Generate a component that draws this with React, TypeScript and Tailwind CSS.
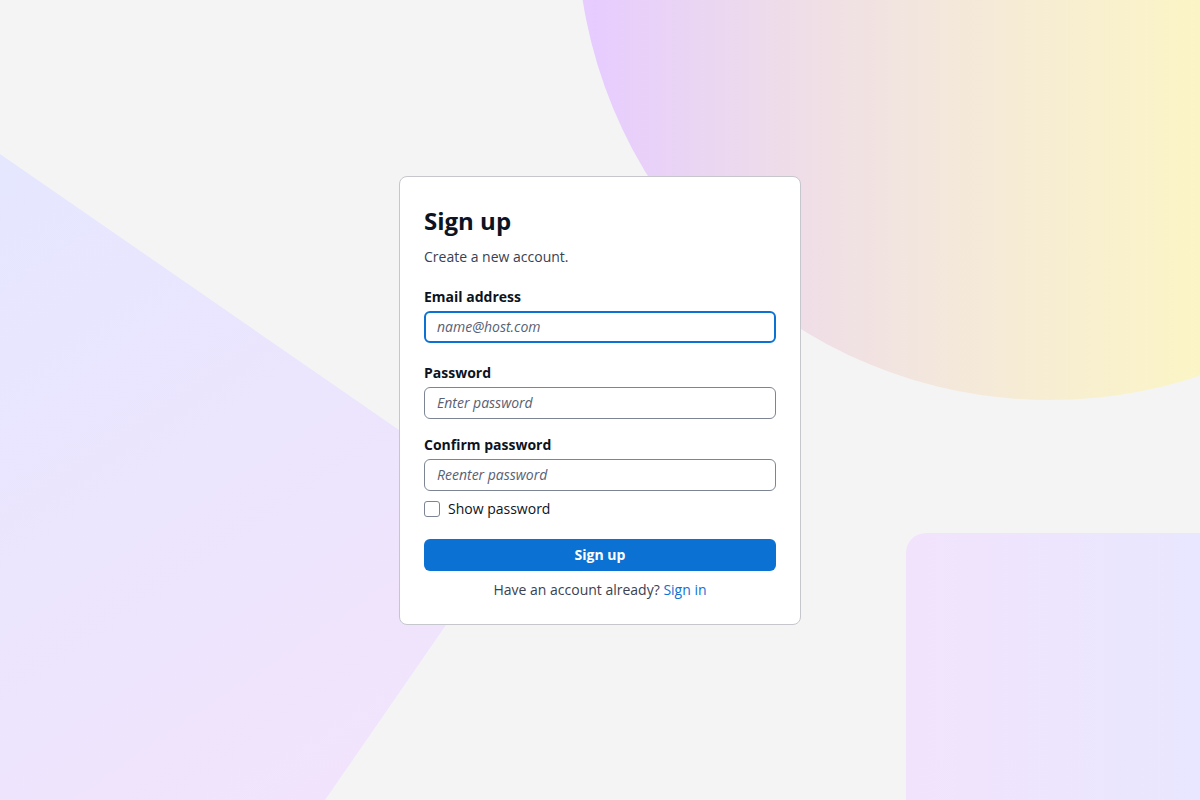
import { useState } from "react";

type FieldProps = {
  label: string;
  placeholder: string;
  type?: string;
  focused?: boolean;
  className?: string;
};

const Field = ({ label, placeholder, type = "text", focused, className }: FieldProps) => (
  <label className={`flex flex-col ${className ?? ""}`}>
    <span className="mb-[4px] text-sm leading-5 font-bold text-[#0c1322]">
      {label}
    </span>
    <input
      type={type}
      placeholder={placeholder}
      className={
        focused
          ? "h-8 w-full rounded-md border-2 border-[#0b72d4] bg-white px-[11px] text-sm text-[#0c1322] outline-none placeholder:text-[#586174] placeholder:italic"
          : "h-8 w-full rounded-md border border-[#7d8594] bg-white px-3 text-sm text-[#0c1322] outline-none placeholder:text-[#586174] placeholder:italic"
      }
    />
  </label>
);

// soft shapes behind the card
const Backdrop = () => (
  <svg
    className="pointer-events-none absolute inset-0 h-full w-full"
    viewBox="0 0 1200 800"
    preserveAspectRatio="none"
  >
    <defs>
      <linearGradient id="sun" gradientUnits="userSpaceOnUse" x1="590" y1="0" x2="1200" y2="0">
        <stop offset="0" stopColor="#e6ccff" />
        <stop offset="0.35" stopColor="#efdee7" />
        <stop offset="0.7" stopColor="#f6ecd5" />
        <stop offset="1" stopColor="#fbf5c6" />
      </linearGradient>
      <linearGradient id="kite" gradientUnits="userSpaceOnUse" x1="0" y1="160" x2="420" y2="780">
        <stop offset="0" stopColor="#e5e7ff" />
        <stop offset="1" stopColor="#f2e3fc" />
      </linearGradient>
      <linearGradient id="tile" gradientUnits="userSpaceOnUse" x1="906" y1="0" x2="1200" y2="0">
        <stop offset="0" stopColor="#f2e3fc" />
        <stop offset="1" stopColor="#e8e7ff" />
      </linearGradient>
    </defs>
    <circle cx="1050" cy="-73" r="473" fill="url(#sun)" />
    <polygon points="0,154 522,515 325,800 0,800" fill="url(#kite)" />
    <rect x="906" y="533" width="420" height="420" rx="20" fill="url(#tile)" />
  </svg>
);

export default function App() {
  const [showPassword, setShowPassword] = useState(false);
  const pwType = showPassword ? "text" : "password";

  return (
    <div className="relative flex h-[800px] w-full items-center justify-center overflow-hidden bg-[#f4f4f4] font-['Open_Sans',sans-serif]">
      <Backdrop />
      <div className="relative flex w-[402px] flex-col rounded-lg border border-[#c5c7cc] bg-white px-6 pt-6 pb-6">
        <h1 className="text-2xl leading-10 font-bold text-[#0c1322]">Sign up</h1>
        <p className="mt-[6px] text-sm leading-5 text-[#3a4150]">Create a new account.</p>

        <Field
          label="Email address"
          placeholder="name@host.com"
          type="email"
          focused
          className="mt-[20px]"
        />
        <Field
          label="Password"
          placeholder="Enter password"
          type={pwType}
          className="mt-[20px]"
        />
        <Field
          label="Confirm password"
          placeholder="Reenter password"
          type={pwType}
          className="mt-[16px]"
        />

        <label className="mt-[8px] flex items-center gap-2 text-sm leading-5 text-[#0c1322]">
          <input
            type="checkbox"
            checked={showPassword}
            onChange={(e) => setShowPassword(e.target.checked)}
            className="h-4 w-4 appearance-none rounded-[3px] border border-[#7d8594] bg-white checked:border-[#0b72d4] checked:bg-[#0b72d4]"
          />
          Show password
        </label>

        <button
          type="button"
          className="mt-[20px] h-8 w-full rounded-md bg-[#0b72d4] text-sm font-bold text-white"
        >
          Sign up
        </button>

        <p className="mt-[9px] text-center text-sm leading-5 text-[#3a4150]">
          Have an account already?{" "}
          <a href="#" className="text-[#0b72d4]">
            Sign in
          </a>
        </p>
      </div>
    </div>
  );
}
